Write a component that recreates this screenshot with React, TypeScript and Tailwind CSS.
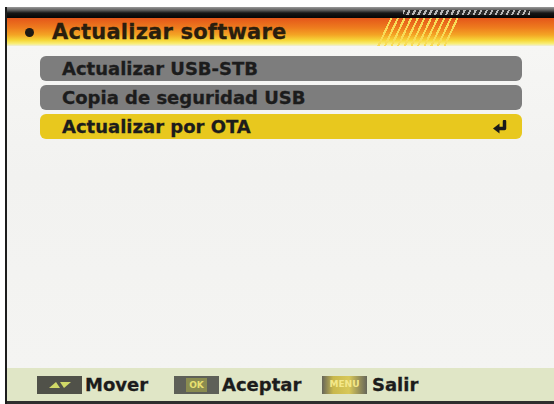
import React from 'react';

const items = [
  { label: 'Actualizar USB-STB', active: false },
  { label: 'Copia de seguridad USB', active: false },
  { label: 'Actualizar por OTA', active: true },
];

function EnterIcon() {
  return (
    <svg width="16" height="14" viewBox="0 0 16 14">
      <path d="M12.5 1.5 V8.5 H6" fill="none" stroke="#1a1a1a" strokeWidth="3.5" strokeLinejoin="round" strokeLinecap="round" />
      <polygon points="1,8.5 7.5,3.5 7.5,13.5" fill="#1a1a1a" />
    </svg>
  );
}

function KeyBox({ children, className }: { children: React.ReactNode; className: string }) {
  return (
    <div className={`flex h-[18px] w-[45px] items-center justify-center ${className}`}>
      {children}
    </div>
  );
}

export default function App() {
  return (
    <div className="h-[404px] w-[554px] bg-white pl-[5px] pt-[7px] font-['DejaVu_Sans',sans-serif]">
      <div className="flex h-full flex-col border-l-2 border-[#1c1c1c]">
        {/* top dark band */}
        <div className="flex h-[11px] bg-[linear-gradient(to_bottom,#9a9a9a,#5a5a5a_30%,#161616_55%,#050505)]">
          <div className="w-[396px]" />
          <div className="mt-[3px] h-[5px] w-[127px] bg-[repeating-linear-gradient(115deg,#b8b8b8_0px,#b8b8b8_2px,#2a2a2a_2px,#2a2a2a_5px)]" />
        </div>

        {/* title bar */}
        <div className="flex h-[28px] items-center bg-[linear-gradient(to_bottom,#e4561a,#ee7c1e_35%,#f4a424_60%,#f6d83a_80%,#f8ee7a_92%,#eeeedc)] pl-[18px]">
          <div className="h-[9px] w-[9px] rounded-full bg-[#1e1a14]" />
          <div className="ml-[18px] flex-1 text-[21px] font-bold leading-none tracking-[0.2px] text-[#2a1e0e] [-webkit-text-stroke:0.3px_#2a1e0e]">
            Actualizar software
          </div>
          <div className="h-full w-[83px] bg-[repeating-linear-gradient(115deg,#f8dc58_0px,#f8dc58_2px,transparent_2px,transparent_6px)] [clip-path:polygon(14%_0,100%_0,86%_100%,0_100%)]" />
          <div className="w-[94px]" />
        </div>

        {/* body */}
        <div className="flex flex-1 flex-col gap-[4px] bg-[linear-gradient(to_bottom,#f6f6f4,#f2f2f0_40%,#f4f4f2)] pl-[33px] pt-[10px]">
          {items.map((item) => (
            <div
              key={item.label}
              className={`flex h-[25px] w-[482px] items-center justify-between rounded-[6px] pl-[22px] pr-[14px] ${
                item.active ? 'bg-[#e8c81e]' : 'bg-[#7d7d7d]'
              }`}
            >
              <span className="text-[18px] font-bold leading-none text-[#1c1c1c] [-webkit-text-stroke:0.3px_#1c1c1c]">
                {item.label}
              </span>
              {item.active && <EnterIcon />}
            </div>
          ))}
        </div>

        {/* footer */}
        <div className="flex h-[33px] items-center bg-[#e0e6c6] pl-[30px]">
          <div className="flex w-[137px] items-center">
            <KeyBox className="bg-[#505149]">
              <svg width="26" height="8" viewBox="0 0 26 8">
                <polygon points="2,7 9,1 13,7" fill="#d0d868" />
                <polygon points="13,1 24,1 17,7" fill="#d0d868" />
              </svg>
            </KeyBox>
            <span className="ml-[3px] text-[18px] font-bold leading-none text-[#1c1c1c] [-webkit-text-stroke:0.3px_#1c1c1c]">
              Mover
            </span>
          </div>
          <div className="flex w-[148px] items-center">
            <KeyBox className="bg-[#5e6058]">
              <span className="bg-[#8a8c50] px-[3px] text-[9px] font-bold leading-[14px] text-[#e8e070]">OK</span>
            </KeyBox>
            <span className="ml-[3px] text-[18px] font-bold leading-none text-[#1c1c1c] [-webkit-text-stroke:0.3px_#1c1c1c]">
              Aceptar
            </span>
          </div>
          <div className="flex items-center">
            <KeyBox className="bg-[linear-gradient(to_right,#66665a,#c8b84c_25%,#d8c858_60%,#66665a)]">
              <span className="text-[9px] font-bold leading-none text-[#f4e88a]">MENU</span>
            </KeyBox>
            <span className="ml-[5px] text-[18px] font-bold leading-none text-[#1c1c1c] [-webkit-text-stroke:0.3px_#1c1c1c]">
              Salir
            </span>
          </div>
        </div>

        <div className="h-[3px] bg-[#2e2e2e]" />
      </div>
    </div>
  );
}
